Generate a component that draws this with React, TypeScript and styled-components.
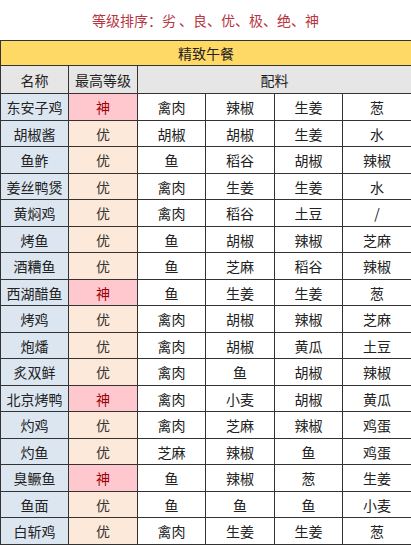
import React from "react";
import styled, { createGlobalStyle } from "styled-components";

const GlobalStyle = createGlobalStyle`
  html, body {
    margin: 0;
    padding: 0;
    background: #ffffff;
  }
  body {
    font-family: "Noto Sans CJK SC", "Noto Sans", sans-serif;
    color: #222;
  }
`;

type Grade = "优" | "神";

const rows: [string, Grade, string, string, string, string][] = [
  ["东安子鸡", "神", "禽肉", "辣椒", "生姜", "葱"],
  ["胡椒酱", "优", "胡椒", "胡椒", "生姜", "水"],
  ["鱼鲊", "优", "鱼", "稻谷", "胡椒", "辣椒"],
  ["姜丝鸭煲", "优", "禽肉", "生姜", "生姜", "水"],
  ["黄焖鸡", "优", "禽肉", "稻谷", "土豆", "/"],
  ["烤鱼", "优", "鱼", "胡椒", "辣椒", "芝麻"],
  ["酒糟鱼", "优", "鱼", "芝麻", "稻谷", "辣椒"],
  ["西湖醋鱼", "神", "鱼", "生姜", "生姜", "葱"],
  ["烤鸡", "优", "禽肉", "胡椒", "辣椒", "芝麻"],
  ["炮燔", "优", "禽肉", "胡椒", "黄瓜", "土豆"],
  ["炙双鲜", "优", "禽肉", "鱼", "胡椒", "辣椒"],
  ["北京烤鸭", "神", "禽肉", "小麦", "胡椒", "黄瓜"],
  ["灼鸡", "优", "禽肉", "芝麻", "辣椒", "鸡蛋"],
  ["灼鱼", "优", "芝麻", "辣椒", "鱼", "鸡蛋"],
  ["臭鳜鱼", "神", "鱼", "辣椒", "葱", "生姜"],
  ["鱼面", "优", "鱼", "鱼", "鱼", "小麦"],
  ["白斩鸡", "优", "禽肉", "生姜", "生姜", "葱"],
];

// row pitch in the sheet is ~26.5px, so rows alternate 27/26
const PITCH = 26.53;
const rowHeight = (i: number) =>
  Math.round((i + 1) * PITCH) - Math.round(i * PITCH) - 1;

const Page = styled.div`
  width: 411px;
`;

const Title = styled.div`
  height: 40px;
  display: flex;
  align-items: center;
  justify-content: center;
  font-size: 14px;
  color: #b8343f;
`;

const Table = styled.table`
  width: 411px;
  border-collapse: collapse;
  table-layout: fixed;
  font-size: 14px;
`;

const Cell = styled.td<{ $bg?: string; $color?: string; $h?: number }>`
  border: 1px solid #333;
  height: ${(p) => p.$h ?? 25}px;
  padding: 0;
  text-align: center;
  vertical-align: middle;
  line-height: 1;
  background: ${(p) => p.$bg ?? "#ffffff"};
  color: ${(p) => p.$color ?? "#222"};
`;

const Banner = styled(Cell)`
  background: #ffd966;
`;

const Head = styled(Cell)`
  background: #e7e6e6;
`;

const gradeBg = (g: Grade) => (g === "神" ? "#ffc7ce" : "#fde9d9");
const gradeColor = (g: Grade) => (g === "神" ? "#9c0006" : "#333");

export default function App() {
  return (
    <Page>
      <GlobalStyle />
      <Title>等级排序：劣 、良、优、极、绝、神</Title>
      <Table>
        <colgroup>
          <col style={{ width: 68 }} />
          <col style={{ width: 69 }} />
          <col style={{ width: 68 }} />
          <col style={{ width: 69 }} />
          <col style={{ width: 68 }} />
          <col style={{ width: 69 }} />
        </colgroup>
        <tbody>
          <tr>
            <Banner colSpan={6} $h={24}>精致午餐</Banner>
          </tr>
          <tr>
            <Head $h={27}>名称</Head>
            <Head $h={27}>最高等级</Head>
            <Head colSpan={4} $h={27}>配料</Head>
          </tr>
          {rows.map((r, i) => (
            <tr key={r[0]}>
              <Cell $h={rowHeight(i)} $bg="#dce6f1">{r[0]}</Cell>
              <Cell $h={rowHeight(i)} $bg={gradeBg(r[1])} $color={gradeColor(r[1])}>{r[1]}</Cell>
              <Cell $h={rowHeight(i)}>{r[2]}</Cell>
              <Cell $h={rowHeight(i)}>{r[3]}</Cell>
              <Cell $h={rowHeight(i)}>{r[4]}</Cell>
              <Cell $h={rowHeight(i)}>{r[5]}</Cell>
            </tr>
          ))}
        </tbody>
      </Table>
    </Page>
  );
}
